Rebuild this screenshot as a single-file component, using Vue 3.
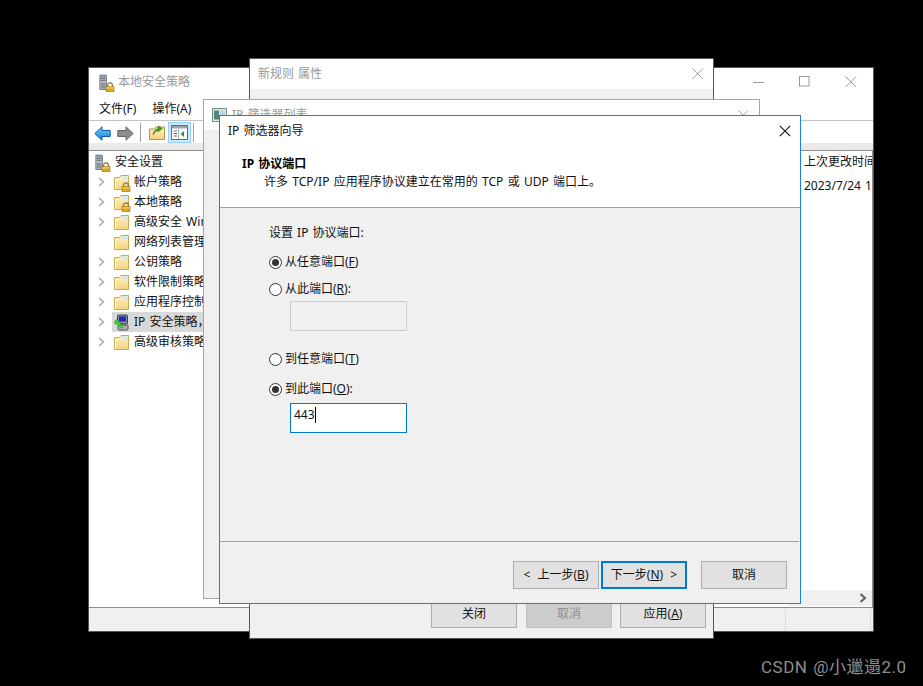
<script setup>
const treeRows = [
  { label: '帐户策略', icon: 'lockfolder', arrow: true },
  { label: '本地策略', icon: 'lockfolder', arrow: true },
  { label: '高级安全 Windows 防火墙', icon: 'folder', arrow: true },
  { label: '网络列表管理器策略', icon: 'folder', arrow: false },
  { label: '公钥策略', icon: 'folder', arrow: true },
  { label: '软件限制策略', icon: 'folder', arrow: true },
  { label: '应用程序控制策略', icon: 'folder', arrow: true },
  { label: 'IP 安全策略，在 本地计算机', icon: 'ipsec', arrow: true, selected: true },
  { label: '高级审核策略配置', icon: 'folder', arrow: true }
]
</script>

<template>
  <div class="desktop">
    <svg class="defs" width="0" height="0" aria-hidden="true">
      <defs>
        <linearGradient id="fold" x1="0" y1="0" x2="0" y2="1">
          <stop offset="0" stop-color="#fff3c4" />
          <stop offset="1" stop-color="#f3d27e" />
        </linearGradient>
        <linearGradient id="bluearrow" x1="0" y1="0" x2="0" y2="1">
          <stop offset="0" stop-color="#7fd0fb" />
          <stop offset="1" stop-color="#0a78d2" />
        </linearGradient>
        <symbol id="lock" viewBox="0 0 10 10">
          <path d="M2.6 5V3.2a2.4 2.4 0 0 1 4.8 0V5" fill="none" stroke="#8a7a50" stroke-width="1.2" />
          <rect x="1" y="4.6" width="8" height="5.2" fill="#d9a520" stroke="#a87c10" stroke-width=".6" />
          <rect x="1.6" y="5.2" width="6.8" height="1.4" fill="#f0cf6a" />
        </symbol>
        <symbol id="folder" viewBox="0 0 17 17">
          <path d="M1.5 3.5V15.5H15.5V1.5H8L6.5 3.5Z" fill="url(#fold)" stroke="#c9a85a" />
          <path d="M9 2.5H14.5V5H9Z" fill="#cfe6f5" />
          <path d="M2 5H3V15H2Z" fill="#fffbe8" />
        </symbol>
        <symbol id="server" viewBox="0 0 15 18">
          <path d="M1 .5H8.5V17H1Z" fill="#c8ccd2" stroke="#5f6670" />
          <path d="M2 2.5H7.5M2 4.5H7.5M2 6.5H7.5" stroke="#4d545e" stroke-width="1" />
          <path d="M2 9H7.5V16H2Z" fill="#8e959f" />
        </symbol>
      </defs>
    </svg>

    <!-- Main console window -->
    <section class="win main-win">
      <header class="main-title">
        <span class="stack-icon title-stack">
          <svg class="ic-server" width="13" height="17"><use href="#server" /></svg>
          <svg class="ic-lock" width="10" height="10"><use href="#lock" /></svg>
        </span>
        <span class="title-text">本地安全策略</span>
        <span class="caption-btns">
          <svg width="12" height="12" viewBox="0 0 12 12"><path d="M0 6.5H11" stroke="#999" /></svg>
          <svg width="12" height="12" viewBox="0 0 12 12"><rect x=".5" y=".5" width="9.5" height="9.5" fill="none" stroke="#999" /></svg>
          <svg width="12" height="12" viewBox="0 0 12 12"><path d="M.5 .5L11 11M11 .5L.5 11" stroke="#999" /></svg>
        </span>
      </header>
      <nav class="menu"><span>文件(F)</span><span>操作(A)</span></nav>
      <div class="toolbar">
        <svg class="tb-back" width="17" height="15" viewBox="0 0 17 15">
          <path d="M.8 7.5L8 .8V4.5H16.2V10.5H8V14.2Z" fill="url(#bluearrow)" stroke="#0d5fa8" />
        </svg>
        <svg class="tb-fwd" width="17" height="15" viewBox="0 0 17 15">
          <path d="M16.2 7.5L9 .8V4.5H.8V10.5H9V14.2Z" fill="#8c8c8c" stroke="#666" />
        </svg>
        <i class="tb-sep"></i>
        <svg class="tb-up" width="16" height="16" viewBox="0 0 16 16">
          <path d="M.5 5V15.5H15.5V3H7L5.5 5Z" fill="url(#fold)" stroke="#b59644" />
          <path d="M4 11C4.5 7 6.5 5 9 4.5V2L13.5 4.5L9 8V6.5C7 7 5.5 8.5 4 11Z" fill="#4f9c2c" stroke="#2f6e17" stroke-width=".5" />
        </svg>
        <span class="tb-active">
          <svg width="17" height="15" viewBox="0 0 17 15">
            <rect x=".5" y=".5" width="16" height="14" fill="#fff" stroke="#6b6b6b" />
            <path d="M1 1H16V3.5H1Z" fill="#9aa4ad" />
            <path d="M2.5 6H6M2.5 8.5H6M2.5 11H6" stroke="#6b6b6b" />
            <path d="M7.5 4V14" stroke="#aaa" />
            <path d="M13 6V12L9.5 9Z" fill="#22a02c" />
          </svg>
        </span>
        <i class="tb-sep"></i>
      </div>
      <div class="strip"></div>
      <div class="panes">
        <aside class="tree">
          <div class="tree-root">
            <span class="stack-icon root-stack">
              <svg class="ic-server" width="13" height="17"><use href="#server" /></svg>
              <svg class="ic-lock" width="10" height="10"><use href="#lock" /></svg>
            </span>
            <span>安全设置</span>
          </div>
          <div v-for="row in treeRows" :key="row.label" class="tree-row">
            <svg class="chev" :class="{ hidden: !row.arrow }" width="7" height="10" viewBox="0 0 7 10">
              <path d="M1 1L5.5 5L1 9" fill="none" stroke="#a6a6a6" stroke-width="1.4" />
            </svg>
            <span class="row-body" :class="{ selected: row.selected }">
              <span class="stack-icon row-icon">
                <svg v-if="row.icon !== 'ipsec'" width="17" height="17"><use href="#folder" /></svg>
                <svg v-if="row.icon === 'lockfolder'" class="ic-lock" width="10" height="10"><use href="#lock" /></svg>
                <svg v-if="row.icon === 'ipsec'" width="17" height="17" viewBox="0 0 17 17">
                  <rect x="4.5" y="1" width="10" height="9" rx="1" fill="#8a9098" stroke="#3a3f4a" />
                  <rect x="6" y="2.5" width="7" height="5" fill="#1c28c8" />
                  <rect x="5" y="11" width="10" height="5" rx="1" fill="#b0b0b0" stroke="#555" />
                  <path d="M1.5 7.5L4 5.5L5.5 8L10 13L8.5 14.5L4 10L2.5 10.5Z" fill="#32e02c" stroke="#138a10" stroke-width=".5" />
                </svg>
              </span>
              <span class="row-label">{{ row.label }}</span>
            </span>
          </div>
        </aside>
        <div class="detail">
          <div class="detail-head">上次更改时间</div>
          <div class="detail-cell">2023/7/24 16:30</div>
          <div class="hscroll">
            <svg width="8" height="10" viewBox="0 0 8 10"><path d="M1.5 1L6 5L1.5 9" fill="none" stroke="#606060" stroke-width="2" /></svg>
          </div>
        </div>
      </div>
      <footer class="status"><i></i><i></i></footer>
    </section>

    <!-- Rule properties window -->
    <section class="win prop-win">
      <header class="plain-title">
        <span>新规则 属性</span>
        <svg width="12" height="12" viewBox="0 0 12 12"><path d="M.5 .5L11 11M11 .5L.5 11" stroke="#999" /></svg>
      </header>
      <div class="prop-body">
        <button class="btn" type="button">关闭</button>
        <button class="btn off" type="button">取消</button>
        <button class="btn" type="button">应用(<u>A</u>)</button>
      </div>
    </section>

    <!-- Filter list window -->
    <section class="win list-win">
      <header class="list-title">
        <svg width="15" height="14" viewBox="0 0 15 14">
          <rect x=".5" y=".5" width="14" height="13" fill="#dfe8e4" stroke="#7a8a88" />
          <rect x="2" y="2.5" width="5" height="9" fill="#4d8a78" />
          <rect x="8" y="2.5" width="5" height="9" fill="#bcd0e6" />
        </svg>
        <span>IP 筛选器列表</span>
        <svg class="push" width="11" height="11" viewBox="0 0 12 12"><path d="M.5 .5L11 11M11 .5L.5 11" stroke="#999" /></svg>
      </header>
    </section>

    <!-- Wizard window -->
    <section class="win wizard">
      <header class="wiz-head">
        <div class="wiz-title">
          <span>IP 筛选器向导</span>
          <svg width="12" height="12" viewBox="0 0 12 12"><path d="M.8 .8L11.2 11.2M11.2 .8L.8 11.2" stroke="#111" stroke-width="1.1" /></svg>
        </div>
        <h2 class="wiz-h">IP 协议端口</h2>
        <p class="wiz-sub">许多 TCP/IP 应用程序协议建立在常用的 TCP 或 UDP 端口上。</p>
      </header>
      <div class="wiz-body">
        <div class="set-label">设置 IP 协议端口:</div>
        <label class="radio r1"><i class="dot on"></i><span>从任意端口(<u>F</u>)</span></label>
        <label class="radio r2"><i class="dot"></i><span>从此端口(<u>R</u>):</span></label>
        <div class="field disabled"></div>
        <label class="radio r3"><i class="dot"></i><span>到任意端口(<u>T</u>)</span></label>
        <label class="radio r4"><i class="dot on"></i><span>到此端口(<u>O</u>):</span></label>
        <div class="field focus"><span>443</span><i class="caret"></i></div>
      </div>
      <footer class="wiz-foot">
        <button class="btn step" type="button">&lt; 上一步(<u>B</u>)</button>
        <button class="btn step primary" type="button">下一步(<u>N</u>) &gt;</button>
        <button class="btn cancel" type="button">取消</button>
      </footer>
    </section>

    <div class="mark">CSDN @小邋遢2.0</div>
  </div>
</template>

<style>
html, body { margin: 0; background: #000; }
</style>

<style scoped>
.desktop {
  position: relative;
  width: 923px;
  height: 686px;
  background: #000;
  overflow: hidden;
  font: 12px/16px "Noto Sans", "Noto Sans CJK SC", sans-serif;
  word-spacing: 1px;
  color: #111;
}
.defs { position: absolute; }
svg { display: block; flex: none; }
.win { position: absolute; box-sizing: border-box; display: flex; flex-direction: column; }

/* main */
.main-win { left: 88px; top: 67px; width: 786px; height: 565px; background: #f0f0f0; border: 1px solid #555; }
.main-title { height: 28px; background: #fff; display: flex; align-items: center; padding-left: 10px; flex: none; }
.stack-icon { position: relative; display: block; flex: none; }
.ic-lock { position: absolute; right: -1px; bottom: -1px; }
.title-stack { width: 15px; height: 17px; margin-right: 4px; }
.title-text { color: #999; }
.caption-btns { margin-left: auto; display: flex; gap: 34px; padding-right: 16px; }
.menu { height: 24px; box-sizing: content-box; background: #fff; display: flex; align-items: center; gap: 16px; padding: 0 0 0 10px; flex: none; border-bottom: 1px solid #c4c4c4; }
.menu span { position: relative; top: 1px; }
.toolbar { height: 22px; background: #fff; display: flex; align-items: center; padding-left: 5px; flex: none; }
.tb-back, .tb-fwd { margin-top: 2px; }
.tb-fwd { margin-left: 6px; }
.tb-sep { width: 1px; height: 19px; background: #a0a0a0; margin: 0 8px 0 6px; flex: none; }
.tb-up { margin-right: 3px; }
.tb-active { box-sizing: border-box; width: 23px; height: 21px; background: #cce8ff; border: 1px solid #99d1ff; display: flex; align-items: center; justify-content: center; margin-right: -4px; }
.strip { height: 7px; background: #e9e9e9; flex: none; border-bottom: 1px solid #8c8c8c; }
.panes { flex: 1; display: flex; background: #fff; border-bottom: 1px solid #8c8c8c; border-right: 1px solid #8c8c8c; min-height: 0; }
.tree { width: 700px; flex: none; padding: 1px 0 0 6px; box-sizing: border-box; white-space: nowrap; }
.tree-root { height: 20px; display: flex; align-items: center; }
.root-stack { width: 15px; height: 17px; margin-right: 5px; }
.tree-row { height: 20px; display: flex; align-items: center; }
.chev { margin: 0 7px 0 3px; }
.chev.hidden { visibility: hidden; }
.row-body { display: flex; align-items: center; height: 20px; padding-left: 1px; flex: 1; }
.row-body.selected { background: #d9d9d9; }
.row-icon { width: 17px; height: 17px; margin-right: 4px; }
.detail { flex: 1; position: relative; overflow: hidden; padding: 3px 0 0 15px; white-space: nowrap; }
.detail-head { height: 24px; line-height: 16px; }
.hscroll { position: absolute; left: 0; right: 0; bottom: 1px; height: 16px; background: #f0f0f0; display: flex; align-items: center; justify-content: flex-end; padding-right: 5px; }
.status { height: 23px; flex: none; display: flex; }
.status i { box-sizing: border-box; height: 20px; margin-top: 2px; width: 1px; background: #dcdcdc; }
.status i:first-child { margin-left: 696px; }
.status i:last-child { margin-left: 84px; }

/* properties */
.prop-win { left: 249px; top: 58px; width: 465px; height: 581px; background: #f0f0f0; border: 1px solid #555; }
.plain-title { height: 30px; background: #fff; display: flex; align-items: center; justify-content: space-between; padding: 0 9px 0 8px; color: #999; flex: none; }
.prop-body { flex: 1; display: flex; justify-content: flex-end; align-items: flex-end; gap: 8px; padding: 0 7px 10px 0; }
.prop-body .btn:first-child { margin-right: 1px; }
.btn {
  box-sizing: border-box;
  width: 86px;
  height: 28px;
  padding: 0;
  border: 1px solid #adadad;
  background: #e1e1e1;
  font: inherit;
  word-spacing: inherit;
  color: #111;
  flex: none;
}
.btn.step { word-spacing: 4px; }
.btn.off { background: #cccccc; border-color: #bfbfbf; color: #8f8f8f; }
.btn.primary { border: 2px solid #0078d7; }
.btn.cancel { margin-left: 12px; }

/* list */
.list-win { left: 203px; top: 99px; width: 557px; height: 500px; background: #f0f0f0; border: 1px solid #a6a6a6; }
.list-title { height: 30px; background: #fff; display: flex; align-items: center; gap: 5px; padding: 0 10px 0 8px; color: #999; flex: none; }
.push { margin-left: auto; }

/* wizard */
.wizard { left: 219px; top: 115px; width: 582px; height: 489px; background: #f0f0f0; border: 1px solid #1883d7; }
.wiz-head { height: 91px; flex: none; background: #fff; border-bottom: 1px solid #a0a0a0; padding-left: 8px; box-sizing: content-box; }
.wiz-title { display: flex; justify-content: space-between; align-items: center; height: 30px; padding-right: 9px; }
.wiz-h { margin: 10px 0 0 14px; font-size: 12px; font-weight: 700; line-height: 16px; color: #000; }
.wiz-sub { margin: 2px 0 0 36px; line-height: 16px; word-spacing: 1.2px; }
.wiz-body { flex: 1; padding: 17px 0 0 49px; display: flex; flex-direction: column; align-items: flex-start; }
.set-label { height: 16px; }
.radio { display: flex; align-items: center; height: 16px; gap: 3px; }
.r1 { margin-top: 13px; }
.r2 { margin-top: 11px; }
.r3 { margin-top: 20px; }
.r4 { margin-top: 14px; }
.dot { position: relative; box-sizing: border-box; width: 13px; height: 13px; border: 1px solid #333; border-radius: 50%; background: #fff; flex: none; }
.dot.on::after { content: ""; position: absolute; left: 2px; top: 2px; width: 7px; height: 7px; border-radius: 50%; background: #333; }
.field { box-sizing: border-box; width: 117px; height: 30px; margin: 4px 0 0 21px; display: flex; align-items: flex-start; padding: 3px 0 0 3px; }
.field.disabled { background: #f0f0f0; border: 1px solid #cccccc; }
.field.focus { background: #fff; border: 1px solid #0078d7; margin-top: 6px; }
.caret { width: 1px; height: 16px; background: #000; margin-left: 0; }
.wiz-foot { height: 62px; flex: none; box-sizing: border-box; border-top: 1px solid #a0a0a0; margin-right: 1px; display: flex; align-items: flex-start; justify-content: flex-end; gap: 2px; padding: 19px 12px 0 0; }

.mark { position: absolute; left: 761px; top: 656px; font: 17px/22px Roboto, "Noto Sans CJK SC", sans-serif; letter-spacing: .5px; color: #8e8e8e; white-space: nowrap; }
</style>
